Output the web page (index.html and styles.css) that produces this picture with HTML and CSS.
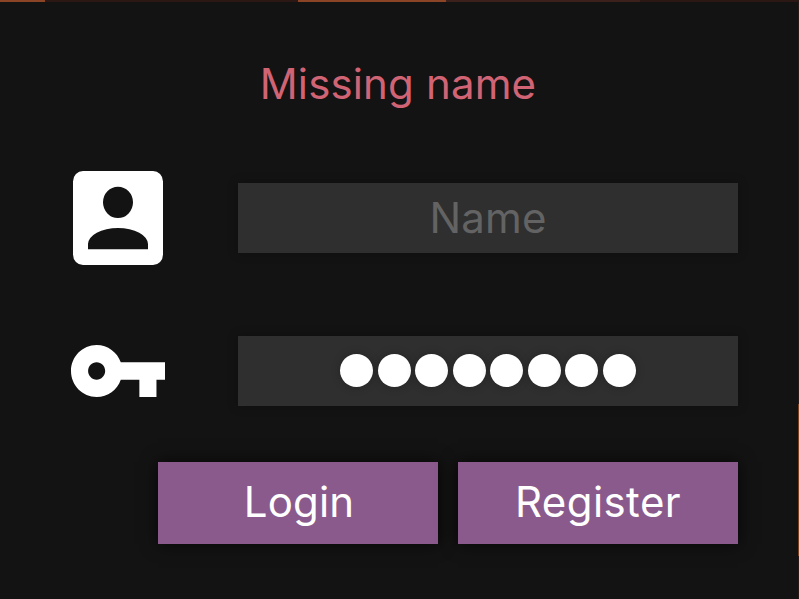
FILE: index.html
```
<!DOCTYPE html>
<html lang="en">
<head>
<meta charset="utf-8">
<title>Login</title>
<link rel="stylesheet" href="styles.css">
</head>
<body>
<form class="panel">
  <p class="message">Missing name</p>
  <div class="row">
    <svg class="icon account" viewBox="3 3 18 18" preserveAspectRatio="none"><path fill-rule="evenodd" d="M5 3H19A2 2 0 0 1 21 5V19A2 2 0 0 1 19 21H5A2 2 0 0 1 3 19V5A2 2 0 0 1 5 3ZM15 9A3 3 0 1 0 9 9A3 3 0 1 0 15 9ZM6 17V18H18V17A6 3.1 0 0 0 6 17Z"/></svg>
    <div class="field placeholder">Name</div>
  </div>
  <div class="row">
    <svg class="icon key" viewBox="1 6 22 12" preserveAspectRatio="none"><path d="M12.65 10C11.83 7.67 9.61 6 7 6c-3.31 0-6 2.69-6 6s2.69 6 6 6c2.61 0 4.83-1.67 5.65-4H17v4h4v-4h2v-4H12.65zM7 14c-1.1 0-2-.9-2-2s.9-2 2-2 2 .9 2 2-.9 2-2 2z"/></svg>
    <div class="field password"><i></i><i></i><i></i><i></i><i></i><i></i><i></i><i></i></div>
  </div>
  <div class="actions">
    <button class="login" type="button">Login</button>
    <button type="button">Register</button>
  </div>
</form>
</body>
</html>
```
FILE: styles.css
```
* {
  box-sizing: border-box;
}

body {
  margin: 0;
  height: 599px;
  padding: 2px 1px 0 0;
  overflow: hidden;
  font: 42px/50px Inter, "Liberation Sans", sans-serif;
  letter-spacing: 0.15px;
  background:
    linear-gradient(to right, #8b4426 45px, #2b1714 45px 298px, #8b4426 298px 446px, #3b201b 446px 640px, #2b1714 640px) top / 100% 2px no-repeat,
    linear-gradient(#2b1714 404px, #7c3e1c 404px 556px, #2b1714 556px) right / 1px 100% no-repeat;
}

.panel {
  height: 597px;
  padding: 57px 60px 0 68px;
  background: #131313;
}

.message {
  margin: 0 0 57px;
  padding-right: 10px;
  height: 50px;
  text-align: center;
  color: #d16474;
}

.row {
  display: flex;
  align-items: center;
  height: 104px;
  margin-bottom: 49px;
}

.icon {
  fill: #fff;
  flex: none;
}

.account {
  width: 90px;
  height: 94px;
  margin: 0 75px 0 5px;
}

.key {
  width: 94px;
  height: 52px;
  margin: 0 73px 0 3px;
}

.field {
  display: flex;
  align-items: center;
  justify-content: center;
  width: 500px;
  height: 70px;
  background: #2f2f2f;
  box-shadow: 0 0 10px rgba(0, 0, 0, 0.25);
}

.placeholder {
  color: #636363;
}

.password {
  gap: 4.5px;
  padding-bottom: 1px;
}

.password i {
  width: 33px;
  height: 33px;
  border-radius: 50%;
  background: #fff;
  box-shadow: 0 0 10px rgba(0, 0, 0, 0.22);
}

.actions {
  display: flex;
  justify-content: flex-end;
  gap: 20px;
  margin-top: -10px;
}

button {
  width: 280px;
  height: 82px;
  padding: 0 0 2px;
  border: 0;
  font: inherit;
  letter-spacing: 0.45px;
  color: #fff;
  background: #8a5a8d;
  box-shadow: 0 0 16px rgba(0, 0, 0, 0.7);
}

.login {
  padding-left: 2px;
  letter-spacing: 0.15px;
}
```
